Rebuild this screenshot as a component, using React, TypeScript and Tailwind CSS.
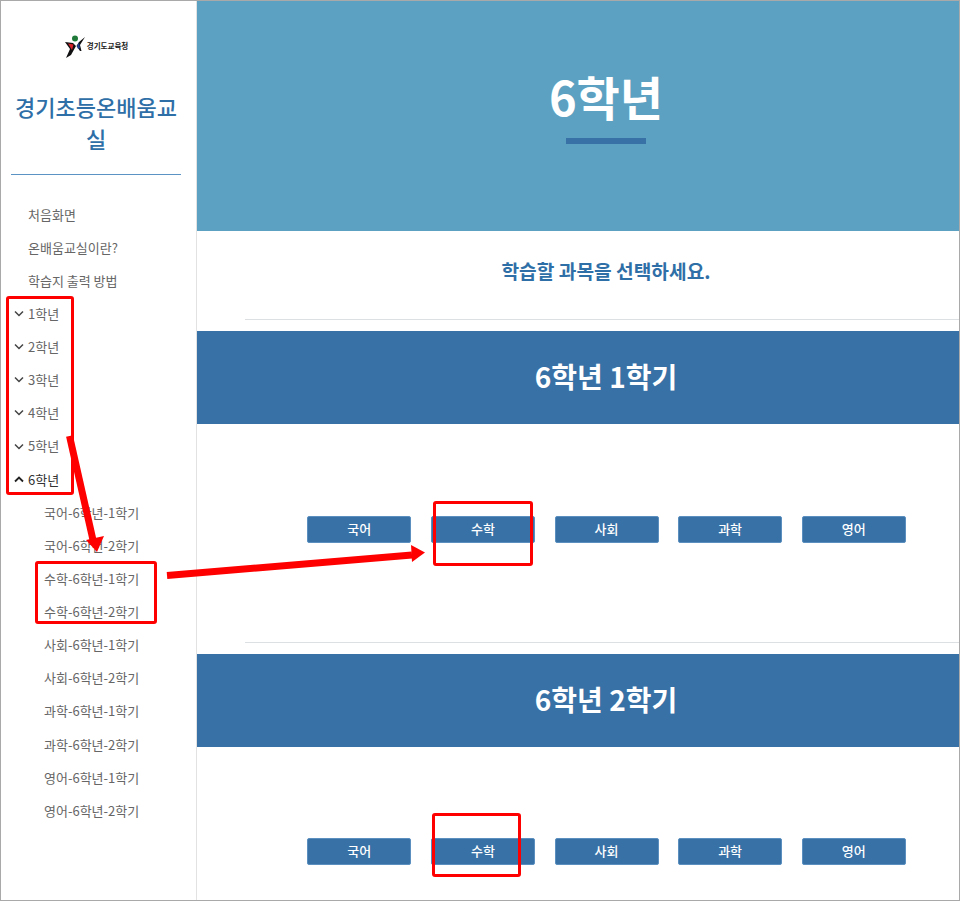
const font = { fontFamily: '"Noto Sans CJK KR", "Noto Sans", sans-serif' };

const topLinks = ["처음화면", "온배움교실이란?", "학습지 출력 방법"];
const grades = ["1학년", "2학년", "3학년", "4학년", "5학년"];
const subLinks = [
  "국어-6학년-1학기",
  "국어-6학년-2학기",
  "수학-6학년-1학기",
  "수학-6학년-2학기",
  "사회-6학년-1학기",
  "사회-6학년-2학기",
  "과학-6학년-1학기",
  "과학-6학년-2학기",
  "영어-6학년-1학기",
  "영어-6학년-2학기",
];
const subjects = ["국어", "수학", "사회", "과학", "영어"];

function Caret({ up }: { up?: boolean }) {
  return (
    <svg width="10" height="7" viewBox="0 0 10 7" className="mr-[4px] shrink-0" fill="none">
      <path
        d={up ? "M1 5.5L5 1.5L9 5.5" : "M1 1.5L5 5.5L9 1.5"}
        stroke={up ? "#222" : "#444"}
        strokeWidth={up ? 1.8 : 1.5}
      />
    </svg>
  );
}

function Logo() {
  return (
    <div className="flex h-[24px] items-center justify-center pr-[4px]">
      <svg width="20" height="23" viewBox="0 0 20 23">
        <circle cx="10" cy="3.5" r="3" fill="#1f7a3a" />
        <path d="M0 7L8 8L11 11L6 20L1 23L5 14Z" fill="#111" />
        <path d="M3 8.5L8.5 9.5L7 15Z" fill="#d8232a" />
        <path d="M20 2L14 7L11.5 11L15 16L16.5 16L15 10Z" fill="#111" />
        <path d="M12 11L14 7.5L15 13L13 14Z" fill="#24408e" />
      </svg>
      <span className="ml-[2px] text-[7.5px] font-bold leading-none text-[#222]">경기도교육청</span>
    </div>
  );
}

function Annotations() {
  return (
    <svg className="pointer-events-none absolute left-0 top-0" width="960" height="901" fill="none">
      <g stroke="#fe0000" strokeWidth="3">
        <rect x="7.5" y="297.5" width="65" height="196" rx="1.5" />
        <rect x="36.5" y="562.5" width="119" height="60" rx="1.5" />
        <rect x="434.5" y="502.5" width="97" height="62" rx="1.5" />
        <rect x="433.5" y="814.5" width="86" height="61" rx="1.5" />
      </g>
      <path d="M69.5 436L93 540" stroke="#fe0000" strokeWidth="7" />
      <path d="M86 540L104 536L97 552Z" fill="#fe0000" />
      <path d="M167 575.5L412 555" stroke="#fe0000" strokeWidth="7" />
      <path d="M411 545L425 552.5L412 562Z" fill="#fe0000" />
    </svg>
  );
}

function Semester({ title, last }: { title: string; last?: boolean }) {
  return (
    <section>
      <div className="ml-[48px] h-px bg-[#dde0e3]" />
      <div className="mt-[11px] flex h-[93px] items-center justify-center bg-[#3871a6] pb-[3px] text-[28px] font-bold text-white">
        {title}
      </div>
      <div className={`flex justify-center gap-[19.6px] pl-px ${last ? "pb-[34px] pt-[91px]" : "pb-[99px] pt-[92px]"}`}>
        {subjects.map((s) => (
          <button
            key={s}
            className="h-[27px] w-[104px] rounded-[2px] border border-[#5a8fc0] bg-[#3871a6] pb-px text-[13px] font-medium text-white"
          >
            {s}
          </button>
        ))}
      </div>
    </section>
  );
}

export default function App() {
  return (
    <div className="relative h-[901px] w-[960px] overflow-hidden border border-[#a9a9a9] bg-white" style={font}>
      <div className="flex h-full">
        <aside className="w-[196px] shrink-0 border-r border-[#e2e2e2]">
          <div className="pt-[33px]">
            <Logo />
          </div>
          <h1 className="mt-[32px] pl-[10px] pr-[15px] text-center text-[22px] font-medium leading-[32px] text-[#2f6fa7]">
            경기초등온배움교실
          </h1>
          <div className="ml-[10px] mr-[15px] mt-[20px] h-px bg-[#5b94c4]" />
          <nav className="mt-[22.6px] text-[13px] leading-[33.12px] text-[#666]">
            {topLinks.map((t) => (
              <div key={t} className="pl-[27px]">
                {t}
              </div>
            ))}
            {grades.map((g) => (
              <div key={g} className="flex items-center pl-[13px]">
                <Caret />
                {g}
              </div>
            ))}
            <div className="flex items-center pl-[13px] text-[#333]">
              <Caret up />
              6학년
            </div>
            {subLinks.map((t) => (
              <div key={t} className="pl-[43px]">
                {t}
              </div>
            ))}
          </nav>
        </aside>
        <main className="w-[818px] shrink-0">
          <div className="flex h-[230px] flex-col items-center bg-[#5ca1c1] pt-[60px]">
            <div className="text-[47px] font-bold leading-[70px] text-white">6학년</div>
            <div className="mt-[7px] h-[6px] w-[80px] bg-[#3871a6]" />
          </div>
          <p className="h-[88px] pt-[25px] text-center text-[19.2px] font-bold leading-[30px] text-[#2f6fa7]">
            학습할 과목을 선택하세요.
          </p>
          <Semester title="6학년 1학기" />
          <Semester title="6학년 2학기" last />
        </main>
      </div>
      <div className="absolute left-[-1px] top-[-1px]">
        <Annotations />
      </div>
    </div>
  );
}
